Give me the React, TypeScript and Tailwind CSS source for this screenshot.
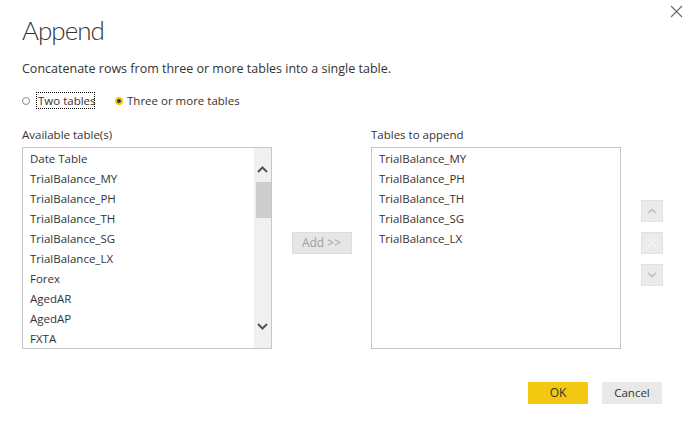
import React from "react";

const left = [
  "Date Table",
  "TrialBalance_MY",
  "TrialBalance_PH",
  "TrialBalance_TH",
  "TrialBalance_SG",
  "TrialBalance_LX",
  "Forex",
  "AgedAR",
  "AgedAP",
  "FXTA",
];
const right = [
  "TrialBalance_MY",
  "TrialBalance_PH",
  "TrialBalance_TH",
  "TrialBalance_SG",
  "TrialBalance_LX",
];

const font = { fontFamily: '"Open Sans", "Noto Sans", sans-serif' };
const titleFont = { fontFamily: 'Lato, "Open Sans", sans-serif' };

export default function App() {
  return (
    <div
      className="relative w-[689px] h-[423px] bg-white text-[#333333] overflow-hidden"
      style={font}
    >
      <svg className="absolute left-[670px] top-[5px]" width="13" height="13" viewBox="0 0 13 13">
        <path d="M1 1 L12 12 M12 1 L1 12" stroke="#6a6a6a" strokeWidth="1.1" fill="none" />
      </svg>
      <div className="pl-[22px] pt-[14px]">
        <div className="text-[26px] font-light leading-[32px] text-[#333333] tracking-[-1px]" style={titleFont}>
          Append
        </div>
        <div className="mt-[14px] text-[12.5px] leading-[18px] text-[#333333]">
          Concatenate rows from three or more tables into a single table.
        </div>
        <div className="mt-[14px] flex items-center text-[11.5px] leading-[17px] h-[17px]">
          <span className="w-[8px] h-[8px] rounded-full border-[1.5px] border-[#8a8a8a] box-border shrink-0" />
          <span className="ml-[6px] w-[59px] border border-dotted border-black pl-[1px] leading-[15px] whitespace-nowrap">
            Two tables
          </span>
          <span className="ml-[20px] w-[8px] h-[8px] rounded-full border-[2px] border-[#f2c811] bg-[#333] box-border shrink-0" />
          <span className="ml-[4px]">Three or more tables</span>
        </div>
        <div className="mt-[17px] flex">
          <div className="w-[250px]">
            <div className="text-[11.5px] leading-[18px] h-[18px]">Available table(s)</div>
            <div className="mt-[3px] h-[202px] border border-[#c6c6c6] flex">
              <div className="flex-1 pl-[7px] pt-[1px] overflow-hidden">
                {left.map((t) => (
                  <div key={t} className="h-[20px] leading-[20px] text-[11.5px] whitespace-nowrap">
                    {t}
                  </div>
                ))}
              </div>
              <div className="w-[17px] bg-[#f0f0f0] flex flex-col items-center">
                <svg className="mt-[18px]" width="11" height="7" viewBox="0 0 11 7">
                  <path d="M1 6 L5.5 1.5 L10 6" stroke="#555" strokeWidth="2" fill="none" />
                </svg>
                <div className="mt-[9px] ml-[1px] w-[15px] h-[36px] bg-[#cdcdcd]" />
                <div className="flex-1" />
                <svg className="mb-[18px]" width="11" height="7" viewBox="0 0 11 7">
                  <path d="M1 1 L5.5 5.5 L10 1" stroke="#555" strokeWidth="2" fill="none" />
                </svg>
              </div>
            </div>
          </div>
          <div className="w-[99px] flex items-start justify-center">
            <div className="mt-[106px] w-[60px] h-[22px] bg-[#e6e6e6] border border-[#dcdcdc] text-[#a0a0a0] text-[12px] flex items-center justify-center">
              Add &gt;&gt;
            </div>
          </div>
          <div className="w-[250px]">
            <div className="text-[11.5px] leading-[18px] h-[18px]">Tables to append</div>
            <div className="mt-[3px] h-[202px] border border-[#c6c6c6] pl-[7px] pt-[1px]">
              {right.map((t) => (
                <div key={t} className="h-[20px] leading-[20px] text-[11.5px] whitespace-nowrap">
                  {t}
                </div>
              ))}
            </div>
          </div>
          <div className="ml-[20px] mt-[74px] flex flex-col gap-[10px]">
            <div className="w-[22px] h-[22px] bg-[#ebebeb] border border-[#e2e2e2] flex items-center justify-center">
              <svg width="10" height="6" viewBox="0 0 10 6">
                <path d="M1 5 L5 1.5 L9 5" stroke="#bdbdbd" strokeWidth="1.6" fill="none" />
              </svg>
            </div>
            <div className="w-[22px] h-[22px] bg-[#ebebeb] border border-[#e2e2e2] flex items-center justify-center">
              <svg width="12" height="12" viewBox="0 0 12 12">
                <path d="M1 1 L11 11 M11 1 L1 11" stroke="#f4f4f4" strokeWidth="1.2" fill="none" />
              </svg>
            </div>
            <div className="w-[22px] h-[22px] bg-[#ebebeb] border border-[#e2e2e2] flex items-center justify-center">
              <svg width="10" height="6" viewBox="0 0 10 6">
                <path d="M1 1 L5 4.5 L9 1" stroke="#bdbdbd" strokeWidth="1.6" fill="none" />
              </svg>
            </div>
          </div>
        </div>
        <div className="mt-[33px] flex justify-end pr-[27px] gap-[14px]">
          <div className="w-[60px] h-[22px] bg-[#f2c811] text-[12px] flex items-center justify-center text-[#333]">
            OK
          </div>
          <div className="w-[60px] h-[22px] bg-[#e9e9e9] text-[11.5px] flex items-center justify-center text-[#333]">
            Cancel
          </div>
        </div>
      </div>
    </div>
  );
}
